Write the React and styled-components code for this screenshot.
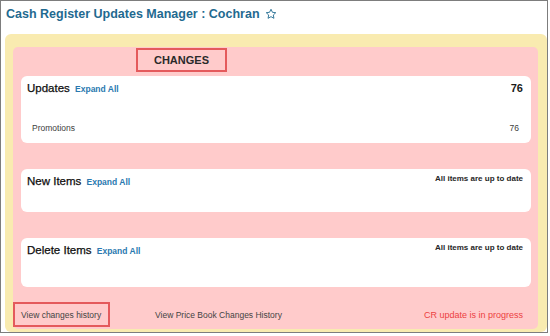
import React from 'react';
import styled, { createGlobalStyle } from 'styled-components';

const GlobalStyle = createGlobalStyle`
  body {
    margin: 0;
    background: #fff;
    font-family: "Liberation Sans", Arial, sans-serif;
  }
`;

const Frame = styled.div`
  box-sizing: border-box;
  width: 548px;
  height: 333px;
  border: 1px solid #7d7d7d;
  padding: 0 0 0 4px;
  display: flex;
  flex-direction: column;
`;

const Title = styled.h1`
  margin: 0;
  height: 33px;
  padding: 5px 0 0 1px;
  box-sizing: border-box;
  display: flex;
  align-items: flex-start;
  gap: 5px;
  font-size: 12.5px;
  line-height: 16px;
  font-weight: bold;
  color: #1f6a90;
`;

const Star = styled.svg`
  width: 12px;
  height: 12px;
  margin-top: 2px;
`;

const Outer = styled.div`
  flex: 1;
  background: #f9ebb0;
  border-radius: 6px;
  padding: 13px 9px 3px 8px;
  display: flex;
`;

const Inner = styled.div`
  flex: 1;
  background: #ffcbcb;
  border-radius: 5px;
  display: flex;
  flex-direction: column;
  padding-bottom: 2px;
`;

const Body = styled.div`
  padding: 1px 7px 0 8px;
  display: flex;
  flex-direction: column;
`;

const Framed = styled.div`
  box-sizing: border-box;
  border: 2px solid #e45a5c;
  display: flex;
  align-items: center;
  justify-content: ${p => (p.$center ? 'center' : 'flex-start')};
  width: ${p => p.$w}px;
  height: ${p => p.$h}px;
  margin-left: ${p => p.$left || 0}px;
`;

const SectionLabel = styled.span`
  font-size: 11px;
  font-weight: bold;
  color: #2a2a2a;
`;

const Card = styled.div`
  box-sizing: border-box;
  background: #fff;
  border-radius: 6px;
  height: ${p => p.$h}px;
  margin-top: ${p => p.$top}px;
  padding: 5px 8px 0 6px;
`;

const CardHead = styled.div`
  display: flex;
  align-items: flex-start;
  justify-content: space-between;
`;

const CardTitle = styled.div`
  font-size: 11.5px;
  line-height: 14px;
  color: #0e0e0e;
  -webkit-text-stroke: 0.25px #0e0e0e;

  a {
    margin-left: 2px;
    font-size: 8.5px;
    font-weight: bold;
    color: #2a79b0;
    text-decoration: none;
    -webkit-text-stroke: 0;
  }
`;

const Count = styled.span`
  font-size: 11px;
  line-height: 14px;
  font-weight: bold;
  color: #1a1a1a;
`;

const Status = styled.span`
  font-size: 8px;
  line-height: 10px;
  font-weight: bold;
  color: #262626;
`;

const Row = styled.div`
  display: flex;
  justify-content: space-between;
  margin-top: 27px;
  padding: 0 4px 0 5px;
  font-size: 8.5px;
  line-height: 11px;
  color: #404040;
`;

const Footer = styled.div`
  margin-top: auto;
  display: flex;
  align-items: center;
  padding-right: 15px;
  font-size: 8.5px;
  color: #444;
`;

const FooterLink = styled.span`
  padding-left: ${p => p.$pad || 0}px;
`;

const Progress = styled.span`
  margin-left: auto;
  font-size: 9px;
  color: #ec3f3f;
`;

const sections = [
  { name: 'Updates', count: 76, h: 67, top: 4, rows: [{ label: 'Promotions', count: 76 }] },
  { name: 'New Items', status: 'All items are up to date', h: 43, top: 26 },
  { name: 'Delete Items', status: 'All items are up to date', h: 49, top: 26 },
];

export default function App() {
  return (
    <>
      <GlobalStyle />
      <Frame>
        <Title>
          Cash Register Updates Manager : Cochran
          <Star viewBox="0 0 24 24">
            <path
              d="M12 2.5l2.9 6.1 6.6.8-4.9 4.6 1.3 6.6L12 17.3l-5.9 3.3 1.3-6.6-4.9-4.6 6.6-.8z"
              fill="none"
              stroke="#1f6a90"
              strokeWidth="1.8"
              strokeLinejoin="round"
            />
          </Star>
        </Title>
        <Outer>
          <Inner>
            <Body>
              <Framed $w={91} $h={24} $left={115} $center>
                <SectionLabel>CHANGES</SectionLabel>
              </Framed>
              {sections.map(s => (
                <Card key={s.name} $h={s.h} $top={s.top}>
                  <CardHead>
                    <CardTitle>
                      {s.name} <a href="#">Expand All</a>
                    </CardTitle>
                    {s.count ? <Count>{s.count}</Count> : <Status>{s.status}</Status>}
                  </CardHead>
                  {(s.rows || []).map(r => (
                    <Row key={r.label}>
                      <span>{r.label}</span>
                      <span>{r.count}</span>
                    </Row>
                  ))}
                </Card>
              ))}
            </Body>
            <Footer>
              <Framed $w={97} $h={25}>
                <FooterLink $pad={6}>View changes history</FooterLink>
              </Framed>
              <FooterLink $pad={45}>View Price Book Changes History</FooterLink>
              <Progress>CR update is in progress</Progress>
            </Footer>
          </Inner>
        </Outer>
      </Frame>
    </>
  );
}
